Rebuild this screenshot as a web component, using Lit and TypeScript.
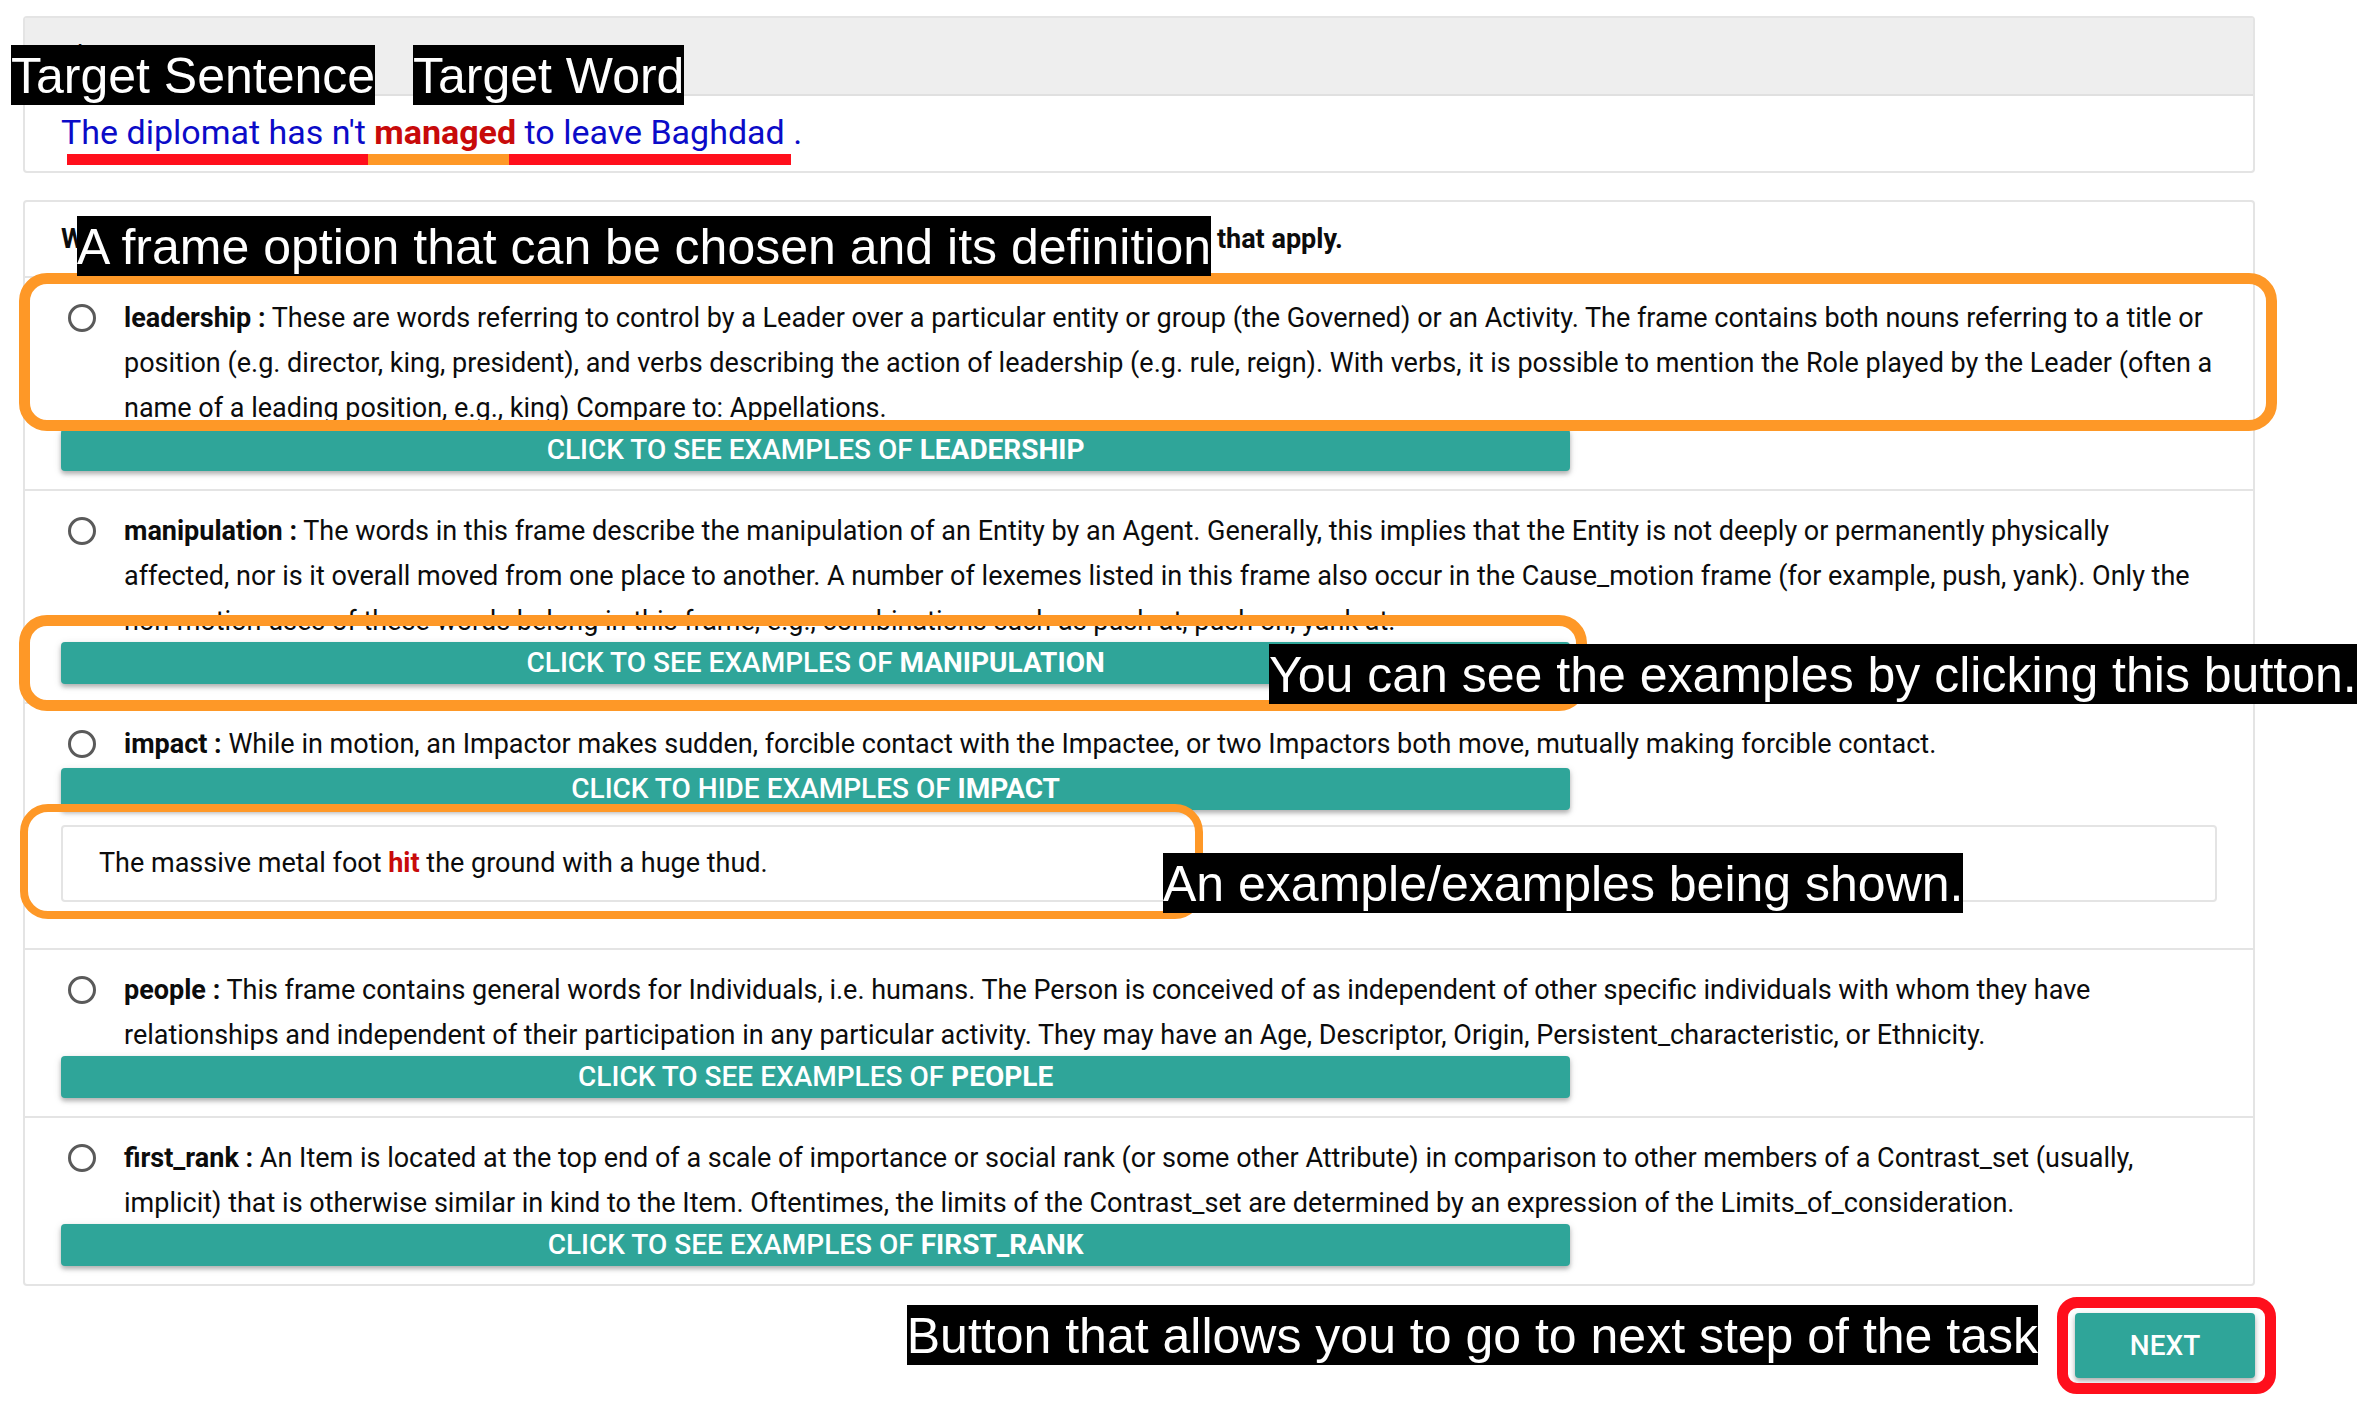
import { LitElement, html, css, nothing } from "lit";
import { customElement, state } from "lit/decorators.js";

interface Frame {
  name: string;
  definition: string;
  example?: [string, string, string];
}

const FRAMES: Frame[] = [
  {
    name: "leadership",
    definition:
      "These are words referring to control by a Leader over a particular entity or group (the Governed) or an Activity. The frame contains both nouns referring to a title or position (e.g. director, king, president), and verbs describing the action of leadership (e.g. rule, reign). With verbs, it is possible to mention the Role played by the Leader (often a name of a leading position, e.g., king) Compare to: Appellations.",
  },
  {
    name: "manipulation",
    definition:
      "The words in this frame describe the manipulation of an Entity by an Agent. Generally, this implies that the Entity is not deeply or permanently physically affected, nor is it overall moved from one place to another. A number of lexemes listed in this frame also occur in the Cause_motion frame (for example, push, yank). Only the non-motion uses of these words belong in this frame, e.g., combinations such as push at, push on, yank at.",
  },
  {
    name: "impact",
    definition:
      "While in motion, an Impactor makes sudden, forcible contact with the Impactee, or two Impactors both move, mutually making forcible contact.",
    example: ["The massive metal foot ", "hit", " the ground with a huge thud."],
  },
  {
    name: "people",
    definition:
      "This frame contains general words for Individuals, i.e. humans. The Person is conceived of as independent of other specific individuals with whom they have relationships and independent of their participation in any particular activity. They may have an Age, Descriptor, Origin, Persistent_characteristic, or Ethnicity.",
  },
  {
    name: "first_rank",
    definition:
      "An Item is located at the top end of a scale of importance or social rank (or some other Attribute) in comparison to other members of a Contrast_set (usually, implicit) that is otherwise similar in kind to the Item. Oftentimes, the limits of the Contrast_set are determined by an expression of the Limits_of_consideration.",
  },
];

@customElement("app-root")
export class AppRoot extends LitElement {
  @state() private open = "impact";

  static styles = css`
    :host {
      display: block;
      background: #fff;
      color: #0c0c0c;
      font: 27px/45px Roboto, "Liberation Sans", sans-serif;
    }
    * {
      box-sizing: border-box;
    }
    .page {
      padding: 16px 115px 24px 23px;
    }
    .card {
      position: relative;
      border: 2px solid #e4e4e4;
      border-radius: 4px;
      margin-bottom: 27px;
    }
    .head {
      background: #eee;
      padding: 16px 36px 15px;
      border-bottom: 2px solid #e0e0e0;
    }
    .head h1,
    .prompt {
      margin: 0;
      font: inherit;
    }
    .sentence {
      margin: 0;
      padding: 14px 36px 16px;
      font-size: 34px;
      color: #0b0bc8;
    }
    .hit {
      color: #c80a0a;
      font-weight: 700;
    }
    .prompt {
      padding: 15px 36px 14px;
      font-weight: 700;
      white-space: nowrap;
    }
    .list {
      list-style: none;
      margin: 0;
      padding: 0;
    }
    .item {
      position: relative;
      border-top: 2px solid #e4e4e4;
      padding: 18px 36px;
    }
    .choice {
      display: flex;
      align-items: flex-start;
      gap: 28px;
      min-height: 48px;
      margin-bottom: -2px;
      padding-left: 7px;
    }
    .choice input {
      appearance: none;
      flex: none;
      width: 28px;
      height: 28px;
      margin: 8px 0 0;
      border: 3px solid #5a5a5a;
      border-radius: 50%;
    }
    .choice input:checked {
      background: radial-gradient(circle, #2fa599 45%, transparent 50%);
      border-color: #2fa599;
    }
    .btn {
      display: block;
      border: 0;
      border-radius: 4px;
      background: #2fa599;
      color: #fff;
      font: 500 28px/42px Roboto, "Liberation Sans", sans-serif;
      text-transform: uppercase;
      padding: 0;
      cursor: pointer;
      box-shadow: 0 3px 4px rgba(0, 0, 0, 0.24), 0 2px 8px rgba(0, 0, 0, 0.12);
    }
    .toggle {
      position: relative;
      width: 70%;
    }
    .toggle .btn {
      width: 100%;
    }
    .example {
      border: 2px solid #e4e4e4;
      border-radius: 4px;
      margin: 15px 0 28px;
      padding: 14px 36px;
    }
    .footer {
      display: flex;
      justify-content: flex-end;
    }
    .next {
      position: relative;
    }
    .next .btn {
      width: 180px;
      line-height: 65px;
    }

    /* Guide overlay: captions, rings and underlines drawn over the form. */
    .note {
      position: absolute;
      z-index: 3;
      padding-top: 2px;
      background: #000;
      color: #fff;
      font: 50px/58px "Liberation Sans", Arial, sans-serif;
      white-space: nowrap;
    }
    .ring {
      position: absolute;
      z-index: 2;
      border: 11px solid #fe9827;
      border-radius: 28px;
      pointer-events: none;
    }
    .note-sentence { left: -14px; top: 27px; }
    .note-word { left: 388px; top: 27px; }
    .note-option { left: 52px; top: 14px; }
    .note-examples { left: 1244px; top: -60px; }
    .note-shown { left: 1138px; top: 149px; }
    .note-next { right: 217px; top: -8px; }
    .ring-option { left: -6px; right: -24px; top: -5px; height: 158px; }
    .ring-button { left: -42px; right: -17px; top: -27px; height: 96px; }
    .ring-example {
      left: -5px;
      width: 1183px;
      top: 100px;
      height: 115px;
      border-width: 8px;
    }
    .ring-next {
      inset: -16px -21px -16px -18px;
      border-color: #ff0f1c;
      border-radius: 20px;
    }
    .rule {
      position: absolute;
      left: 42px;
      top: 136px;
      width: 724px;
      height: 11px;
      background: linear-gradient(
        to right,
        #ff0f1c 301px,
        #fe9827 301px 442px,
        #ff0f1c 442px
      );
    }
  `;

  private toggle(name: string) {
    this.open = this.open === name ? "" : name;
  }

  private renderFrame(f: Frame) {
    const shown = this.open === f.name;
    return html`
      <li class="item">
        <label class="choice">
          <input type="radio" name="frame" value=${f.name} />
          <span><b>${f.name} :</b> ${f.definition}</span>
        </label>
        <div class="toggle">
          <button class="btn" @click=${() => this.toggle(f.name)}>
            Click to ${shown ? "hide" : "see"} examples of <b>${f.name}</b>
          </button>
          ${f.name === "manipulation"
            ? html`<div class="ring ring-button"></div>`
            : nothing}
        </div>
        ${shown && f.example
          ? html`<div class="example">
              ${f.example[0]}<span class="hit">${f.example[1]}</span>${f.example[2]}
            </div>`
          : nothing}
        ${f.name === "leadership"
          ? html`<div class="ring ring-option"></div>`
          : nothing}
        ${f.name === "impact"
          ? html`<div class="ring ring-example"></div>
              <div class="note note-examples">You can see the examples by clicking this button.</div>
              <div class="note note-shown">An example/examples being shown.</div>`
          : nothing}
      </li>
    `;
  }

  render() {
    return html`
      <main class="page">
        <section class="card">
          <header class="head"><h1>The</h1></header>
          <p class="sentence">
            The diplomat has n't <span class="hit">managed</span> to leave Baghdad .
          </p>
          <div class="rule"></div>
          <div class="note note-sentence">Target Sentence</div>
          <div class="note note-word">Target Word</div>
        </section>

        <section class="card">
          <h2 class="prompt">
            Which of these frames fits the meaning of the target word in this sentence? Please choose ALL that apply.
          </h2>
          <div class="note note-option">A frame option that can be chosen and its definition</div>
          <ul class="list">
            ${FRAMES.map((f) => this.renderFrame(f))}
          </ul>
        </section>

        <footer class="footer">
          <div class="next">
            <button class="btn">Next</button>
            <div class="ring ring-next"></div>
            <div class="note note-next">Button that allows you to go to next step of the task</div>
          </div>
        </footer>
      </main>
    `;
  }
}
